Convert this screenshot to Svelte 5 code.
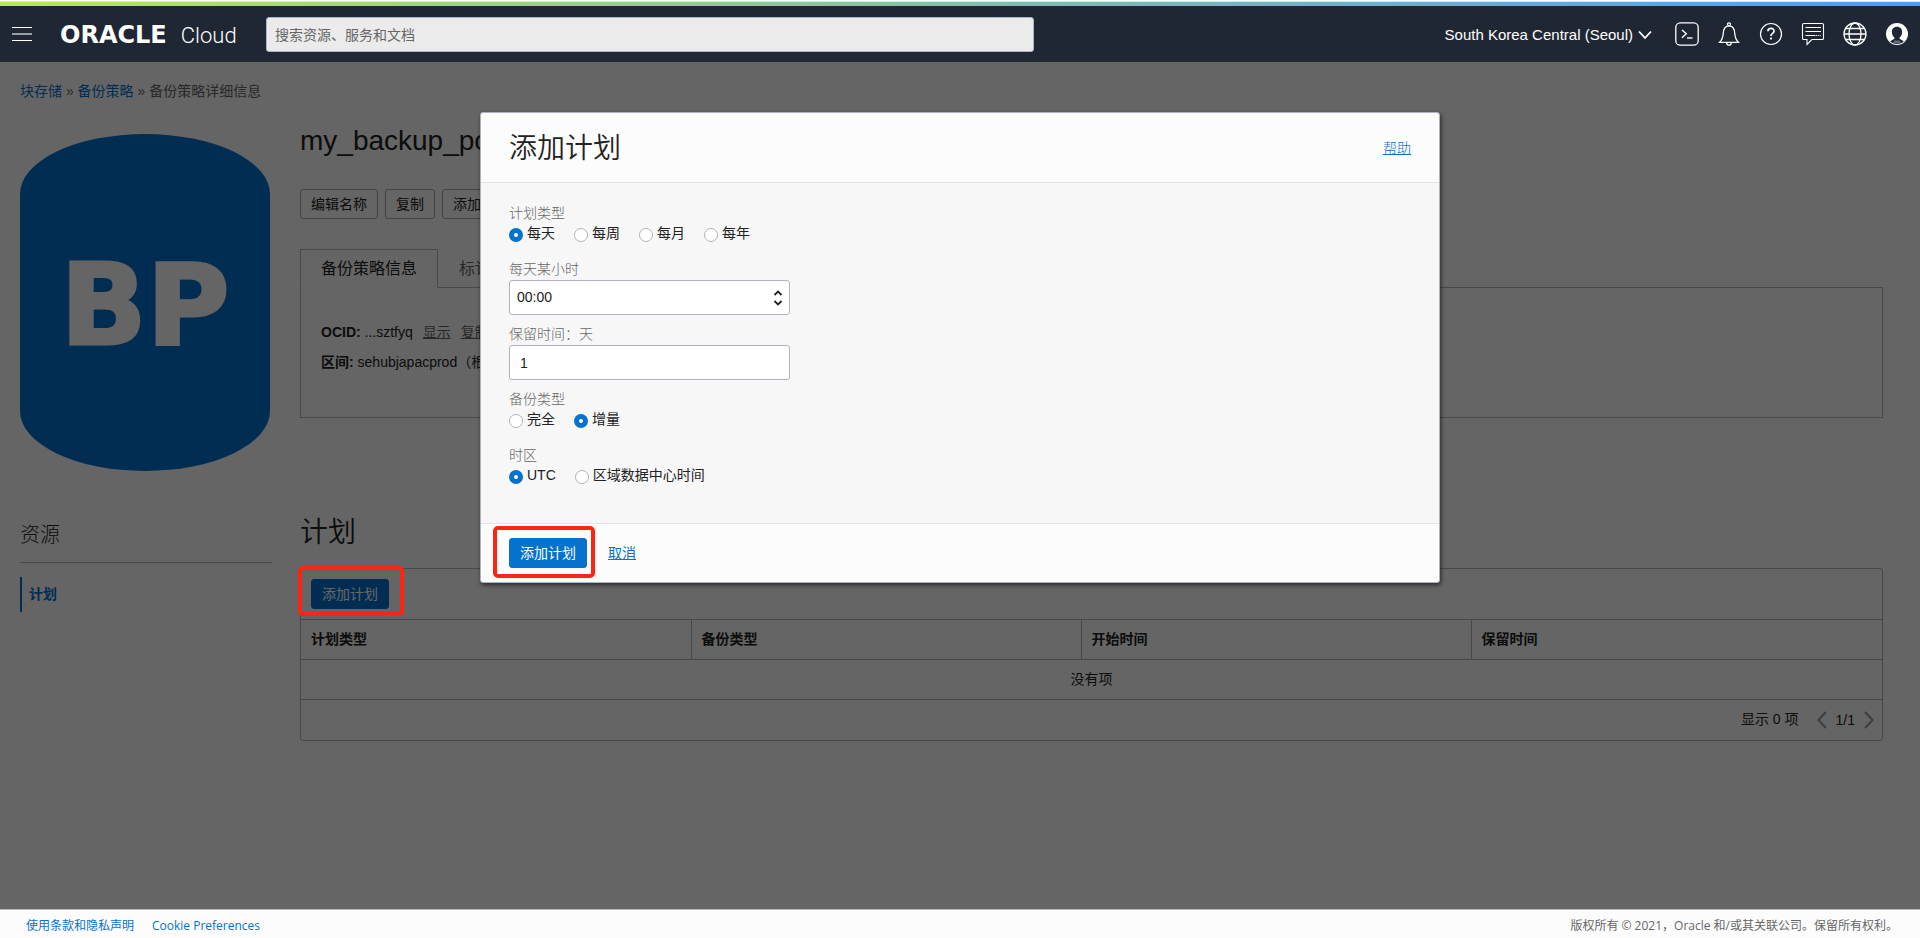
<script>
  let scheduleType = $state('每天');
  let backupType = $state('增量');
  let timezone = $state('UTC');
  let hour = $state('00:00');
  let retention = $state('1');

  const hours = Array.from({ length: 24 }, (_, i) => `${String(i).padStart(2, '0')}:00`);
  const columns = ['计划类型', '备份类型', '开始时间', '保留时间'];
</script>

<div class="page">
  <div class="stripe"></div>
  <header class="topbar">
    <button class="icon-btn menu" aria-label="菜单">
      <svg width="20" height="16" viewBox="0 0 20 16"><path d="M0 1.5h20M0 14.5h20" stroke="#fff" /><path d="M0 8h20" stroke="#fff" stroke-width="2" opacity=".55" /></svg>
    </button>
    <a class="brand" href="#home"><b>ORACLE</b><span>Cloud</span></a>
    <input class="search" type="search" placeholder="搜索资源、服务和文档" aria-label="搜索资源、服务和文档" />
    <div class="tools">
      <button class="region">South Korea Central (Seoul)
        <svg width="14" height="10" viewBox="0 0 14 10"><path d="M1 1.5l6 6.5 6-6.5" fill="none" stroke="#fff" stroke-width="1.8" /></svg>
      </button>
      <button class="icon-btn" aria-label="Cloud Shell">
        <svg width="24" height="24" viewBox="0 0 24 24" fill="none" stroke="#fff"><rect x=".8" y=".8" width="22.4" height="22.4" rx="4.5" stroke-width="1.3" /><path d="M7 8l4.3 3.8L7 15.8" stroke-width="1.4" /><path d="M12 16h5.5" stroke-width="1.4" /></svg>
      </button>
      <button class="icon-btn" aria-label="通知">
        <svg width="24" height="24" viewBox="0 0 24 24" fill="none" stroke="#fff" stroke-width="1.3"><circle cx="12" cy="2.3" r="1.5" /><path d="M2.6 20.3c2.6-2.5 3.3-4.5 3.6-8.6C6.5 6.6 8.4 3.9 12 3.9s5.5 2.7 5.8 7.8c.3 4.1 1 6.1 3.6 8.6z" /><path d="M9.6 20.6c.2 3.3 4.6 3.3 4.8 0" /></svg>
      </button>
      <button class="icon-btn" aria-label="帮助">
        <svg width="24" height="24" viewBox="0 0 24 24" fill="none" stroke="#fff"><circle cx="12" cy="12" r="10.5" stroke-width="1.2" /><path d="M8.9 9.2c.1-3.8 6.3-3.6 6.2-.1 0 2.4-3.1 2.3-3.1 5" stroke-width="1.7" /><path d="M12 15.6v2" stroke-width="1.8" /></svg>
      </button>
      <button class="icon-btn" aria-label="反馈">
        <svg width="24" height="24" viewBox="0 0 24 24" fill="none" stroke="#fff" stroke-width="1.1"><path d="M2.8 1.500h18.400q1.300 0 1.300 1.300v13.400q0 1.300-1.300 1.300h-10.400L6 22.300v-4.800H2.800q-1.300 0-1.300-1.300V2.800q0-1.300 1.300-1.300z" /><path d="M4.5 5.5h15.5M4.5 9.5h15.5M4.5 13.5h10" /><path d="M15 13.5h5" stroke-dasharray="1.2 1" /></svg>
      </button>
      <button class="icon-btn" aria-label="语言">
        <svg width="24" height="24" viewBox="0 0 24 24" fill="none" stroke="#fff" stroke-width="1.3"><circle cx="12" cy="12" r="11" /><ellipse cx="12" cy="12" rx="6" ry="11" /><path d="M1 12h22M3 6.5h18M3 17.5h18" /></svg>
      </button>
      <button class="icon-btn" aria-label="个人资料">
        <svg width="24" height="24" viewBox="0 0 24 24"><circle cx="12" cy="12" r="11" fill="#fff" /><path d="M12 4.800c3.400 0 5.300 2.300 5.100 5.500-.1 2.700-1.200 4.300-2.500 5.300v1.200l4.200 2.500C16 23 8 23 5.200 19.300l4.200-2.500v-1.200c-1.300-1-2.400-2.600-2.500-5.300-.2-3.200 1.700-5.500 5.100-5.500z" fill="#1e2733" /><path d="M8 20.500l2-2.200q2 .8 4 0l2 2.200q-4 1.600-8 0z" fill="#68707a" /></svg>
      </button>
    </div>
  </header>

  <main>
    <nav class="crumbs" aria-label="路径">
      <a href="#block">块存储</a> » <a href="#policies">备份策略</a> » <span>备份策略详细信息</span>
    </nav>

    <div class="layout">
      <aside>
        <svg class="badge" viewBox="0 0 250 337" role="img" aria-label="BP">
          <path d="M0 60A125 60 0 0 1 250 60V277A125 60 0 0 1 0 277z" fill="#0572ce" />
          <text x="125" y="210" text-anchor="middle">BP</text>
        </svg>
        <h2>资源</h2>
        <a class="side-link" href="#schedules">计划</a>
      </aside>

      <section class="detail">
        <h1>my_backup_policy</h1>
        <div class="actions">
          <button class="btn">编辑名称</button>
          <button class="btn">复制</button>
          <button class="btn">添加标记</button>
        </div>

        <div class="tabs" role="tablist">
          <button class="tab active" role="tab" aria-selected="true">备份策略信息</button>
          <button class="tab" role="tab" aria-selected="false">标记</button>
        </div>
        <div class="panel" role="tabpanel">
          <p><b>OCID:</b> ...sztfyq <a href="#show">显示</a><a href="#copy">复制</a></p>
          <p><b>区间:</b> sehubjapacprod（根）</p>
        </div>

        <h1 class="section-title">计划</h1>
        <div class="list">
          <div class="list-bar">
            <span class="marked side"><button class="btn primary">添加计划</button></span>
          </div>
          <table>
            <thead>
              <tr>{#each columns as column}<th scope="col">{column}</th>{/each}</tr>
            </thead>
            <tbody>
              <tr><td colspan="4">没有项</td></tr>
            </tbody>
          </table>
          <div class="pager">
            <span class="count">显示 0 项</span>
            <button class="icon-btn" aria-label="上一页"><svg width="10" height="18" viewBox="0 0 10 18"><path d="M9 1L1.5 9 9 17" fill="none" stroke="#999" stroke-width="2" /></svg></button>
            <span>1/1</span>
            <button class="icon-btn" aria-label="下一页"><svg width="10" height="18" viewBox="0 0 10 18"><path d="M1 1l7.5 8L1 17" fill="none" stroke="#999" stroke-width="2" /></svg></button>
          </div>
        </div>
      </section>
    </div>

    <div class="overlay">
      <form class="dialog" role="dialog" aria-labelledby="dialog-title" onsubmit={(e) => e.preventDefault()}>
        <div class="dialog-head">
          <h1 id="dialog-title">添加计划</h1>
          <a class="help" href="#help">帮助</a>
        </div>

        <div class="dialog-body">
          <fieldset>
            <legend>计划类型</legend>
            <div class="radios">
              {#each ['每天', '每周', '每月', '每年'] as option}
                <label><input type="radio" name="schedule" value={option} bind:group={scheduleType} /><span>{option}</span></label>
              {/each}
            </div>
          </fieldset>
          <div class="field">
            <label for="hour">每天某小时</label>
            <div class="select">
              <select id="hour" bind:value={hour}>
                {#each hours as h}<option value={h}>{h}</option>{/each}
              </select>
              <svg width="10" height="16" viewBox="0 0 10 16"><path d="M1.5 5L5 1.5 8.5 5M1.5 11L5 14.5 8.5 11" fill="none" stroke="#222" stroke-width="1.8" /></svg>
            </div>
          </div>
          <div class="field">
            <label for="retention">保留时间：天</label>
            <input id="retention" type="text" bind:value={retention} />
          </div>
          <fieldset>
            <legend>备份类型</legend>
            <div class="radios">
              {#each ['完全', '增量'] as option}
                <label><input type="radio" name="backup" value={option} bind:group={backupType} /><span>{option}</span></label>
              {/each}
            </div>
          </fieldset>
          <fieldset>
            <legend>时区</legend>
            <div class="radios">
              {#each ['UTC', '区域数据中心时间'] as option}
                <label><input type="radio" name="zone" value={option} bind:group={timezone} /><span>{option}</span></label>
              {/each}
            </div>
          </fieldset>
        </div>

        <div class="dialog-foot">
          <span class="marked"><button class="btn primary">添加计划</button></span>
          <a href="#cancel">取消</a>
        </div>
      </form>
    </div>
  </main>

  <footer>
    <nav>
      <a href="#terms">使用条款和隐私声明</a>
      <a href="#cookies">Cookie Preferences</a>
    </nav>
    <span>版权所有 © 2021，Oracle 和/或其关联公司。保留所有权利。</span>
  </footer>
</div>

<style>
  :global(body) {
    margin: 0;
  }
  .page {
    --blue: #0572ce;
    --line: #aeb4bf;
    min-height: 100vh;
    display: flex;
    flex-direction: column;
    font: 14px/20px "Liberation Sans", "Noto Sans CJK SC", sans-serif;
    color: #222;
    background: #fcfcfc;
  }
  .page :global(*) {
    box-sizing: border-box;
  }
  button,
  input,
  select {
    font: inherit;
    color: inherit;
    margin: 0;
  }
  a {
    color: var(--blue);
    text-decoration: none;
  }
  h1,
  h2,
  p {
    margin: 0;
    font-weight: 400;
  }
  h1 {
    font-size: 28px;
    line-height: 40px;
    font-weight: 350;
  }
  svg {
    display: block;
  }

  .stripe {
    height: 4px;
    margin-top: 1px;
    border-top: 1px solid #e4e4e8;
    box-sizing: content-box !important;
    background: linear-gradient(90deg, #b5e853, #4b9bff);
  }
  .topbar {
    display: flex;
    align-items: center;
    height: 56px;
    padding: 0 11px 0 12px;
    background: #1e2733;
    color: #fff;
  }
  .icon-btn {
    padding: 0;
    border: 0;
    background: none;
  }
  .brand {
    display: flex;
    align-items: baseline;
    gap: 14px;
    flex: none;
    width: 206px;
    margin-left: 28px;
    padding-top: 2px;
    color: #fff;
    font-size: 22px;
    line-height: 28px;
  }
  .brand b {
    font-family: "DejaVu Sans", sans-serif;
    font-size: 24px;
    font-weight: 700;
  }
  .brand span {
    font-family: Roboto, sans-serif;
    font-weight: 300;
  }
  .search {
    flex: none;
    width: 40vw;
    height: 35px;
    padding: 2px 8px 0;
    border: 1px solid #aeb4bf;
    border-radius: 3px;
    background: #ebebeb;
  }
  .search::placeholder {
    color: #666;
  }
  .tools {
    display: flex;
    align-items: center;
    gap: 18px;
    margin-left: auto;
  }
  .region {
    display: flex;
    align-items: center;
    gap: 5px;
    margin-right: 5px;
    padding: 2px 0 0;
    border: 0;
    background: none;
    font-size: 15px;
    white-space: nowrap;
  }

  main {
    position: relative;
    flex: 1;
    padding: 19px 37px 60px 20px;
  }
  .crumbs {
    color: #666;
  }
  .layout {
    display: grid;
    grid-template-columns: 252px minmax(0, 1fr);
    gap: 28px;
  }
  aside {
    padding-top: 33px;
  }
  .badge {
    width: 250px;
  }
  .badge text {
    font: 700 113px "DejaVu Sans", sans-serif;
    fill: #fcfcfc;
    stroke: #fcfcfc;
    stroke-width: 3px;
  }
  h2 {
    margin: 50px 0 14px;
    padding-bottom: 13px;
    border-bottom: 1px solid var(--line);
    font-size: 20px;
    line-height: 28px;
    font-weight: 300;
  }
  .side-link {
    display: block;
    padding: 7px;
    border-left: 2px solid var(--blue);
    line-height: 21px;
    font-weight: 700;
  }

  .detail h1:first-child {
    padding-top: 20px;
  }
  .actions {
    display: flex;
    gap: 7px;
    margin: 28px 0 30px;
  }
  .btn {
    height: 30px;
    padding: 0 10px;
    border: 1px solid #aaa;
    border-radius: 3px;
    background: #fcfcfc;
    line-height: 20px;
    white-space: nowrap;
  }
  .btn.primary {
    border-color: var(--blue);
    background: var(--blue);
    color: #fff;
  }
  .tabs {
    display: flex;
  }
  .tab {
    height: 39px;
    padding: 0 20px;
    border: 1px solid transparent;
    background: none;
    color: #666;
    font-size: 16px;
  }
  .tab.active {
    position: relative;
    border-color: var(--line);
    border-bottom-color: #fcfcfc;
    background: #fcfcfc;
    color: #222;
  }
  .panel {
    min-height: 131px;
    margin-top: -1px;
    padding: 34px 20px;
    border: 1px solid var(--line);
  }
  .panel p {
    margin-bottom: 10px;
  }
  .panel a {
    margin-left: 6px;
    color: #666;
    text-decoration: underline;
  }
  .panel a + a {
    margin-left: 10px;
  }
  .section-title {
    margin: 95px 0 15px;
  }
  .list {
    border: 1px solid var(--line);
    border-radius: 3px;
  }
  .list-bar {
    display: flex;
    padding: 10px;
  }
  .marked {
    position: relative;
    display: inline-flex;
  }
  .marked::after {
    content: "";
    position: absolute;
    z-index: 20;
    inset: -12px -8px -10px -16px;
    border: 4px solid #ff2314;
    border-radius: 5px;
    pointer-events: none;
  }
  .marked.side::after {
    inset: -13px -15px -7px -13px;
  }
  table {
    width: 100%;
    table-layout: fixed;
    border-collapse: collapse;
  }
  th,
  td {
    height: 40px;
    padding: 0 10px 2px;
    border: solid var(--line);
    border-width: 1px 0;
    text-align: center;
  }
  th {
    width: 390px;
    border-right-width: 1px;
    text-align: left;
    font-weight: 700;
  }
  th:last-child {
    width: auto;
    border-right: 0;
  }
  .pager {
    display: flex;
    align-items: center;
    justify-content: flex-end;
    gap: 9px;
    height: 40px;
    padding-right: 8px;
  }
  .count {
    margin-right: 9px;
    padding-bottom: 2px;
  }

  .overlay {
    position: absolute;
    z-index: 10;
    inset: 0;
    display: flex;
    justify-content: center;
    align-items: flex-start;
    padding-top: 50px;
    background: rgba(0, 0, 0, 0.6);
  }
  .dialog {
    width: 50%;
    border: 1px solid var(--line);
    border-radius: 3px;
    background: #fcfcfc;
    box-shadow: 1px 2px 4px rgba(0, 0, 0, 0.6);
  }
  .dialog-head {
    display: flex;
    align-items: center;
    justify-content: space-between;
    height: 70px;
    padding: 0 28px;
    border-bottom: 1px solid #e3e4e6;
  }
  .dialog-head h1 {
    padding-top: 2px;
  }
  .help,
  .dialog-foot a {
    text-decoration: underline;
  }
  .help {
    font-weight: 300;
  }
  .dialog-body {
    padding: 20px 28px 22px;
    background: #f7f7f7;
  }
  fieldset {
    margin: 0 0 13px;
    padding: 0;
    border: 0;
  }
  legend,
  .field label {
    display: block;
    margin-bottom: 1px;
    padding: 0;
    color: #666;
    font-weight: 300;
  }
  .field {
    margin-bottom: 9px;
  }
  .radios {
    display: flex;
    gap: 19px;
    height: 22px;
  }
  .radios label {
    display: flex;
    gap: 4px;
    line-height: 18px;
  }
  .radios input {
    appearance: none;
    width: 14px;
    height: 14px;
    margin-top: 4px;
    border: 1px solid var(--line);
    border-radius: 50%;
    background: #fff;
  }
  .radios input:checked {
    border: 5px solid var(--blue);
  }
  .select {
    position: relative;
    width: 281px;
  }
  .select svg {
    position: absolute;
    top: 10px;
    right: 7px;
    pointer-events: none;
  }
  select,
  .field input {
    display: block;
    appearance: none;
    width: 281px;
    height: 35px;
    padding: 0 7px 2px;
    border: 1px solid var(--line);
    border-radius: 3px;
    background: #fff;
  }
  .field input {
    padding: 0 10px;
  }
  .dialog-foot {
    display: flex;
    align-items: center;
    gap: 21px;
    padding: 14px 28px;
    border-top: 1px solid #e3e4e6;
  }

  footer {
    display: flex;
    align-items: center;
    justify-content: space-between;
    height: 29px;
    padding: 4px 22px 0 26px;
    border-top: 1px solid #b9b5c0;
    color: #666;
    font: 12px/20px "Open Sans", "Noto Sans CJK SC", sans-serif;
  }
  footer nav {
    display: flex;
    gap: 18px;
  }
</style>
